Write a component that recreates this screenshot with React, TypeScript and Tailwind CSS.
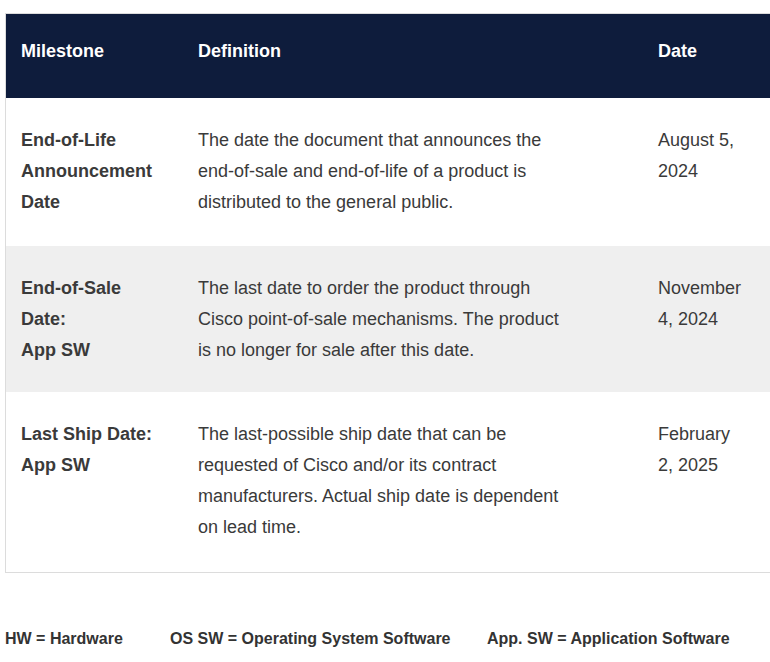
const rows = [
  {
    m: ['End-of-Life', 'Announcement', 'Date'],
    d: [
      'The date the document that announces the',
      'end-of-sale and end-of-life of a product is',
      'distributed to the general public.',
    ],
    t: ['August 5,', '2024'],
    bg: 'bg-white',
    h: 'h-[148px]',
  },
  {
    m: ['End-of-Sale', 'Date:', 'App SW'],
    d: [
      'The last date to order the product through',
      'Cisco point-of-sale mechanisms. The product',
      'is no longer for sale after this date.',
    ],
    t: ['November', '4, 2024'],
    bg: 'bg-[#efefef]',
    h: 'h-[146px]',
  },
  {
    m: ['Last Ship Date:', 'App SW'],
    d: [
      'The last-possible ship date that can be',
      'requested of Cisco and/or its contract',
      'manufacturers. Actual ship date is dependent',
      'on lead time.',
    ],
    t: ['February', '2, 2025'],
    bg: 'bg-white',
    h: 'h-[180px]',
  },
];

export default function App() {
  return (
    <div className="w-[770px] h-[662px] bg-white overflow-hidden text-[#3a3a3a] font-[Liberation_Sans,Arial,sans-serif]">
      <div className="pt-[13px] pl-[5px]">
        <div className="border border-r-0 border-[#dcdcdc]">
          <div className="flex h-[84px] bg-[#0e1c3c] text-white font-bold text-[18px] leading-[31px]">
            <div className="w-[177px] pl-[15px] pt-[22px]">Milestone</div>
            <div className="w-[460px] pl-[15px] pt-[22px]">Definition</div>
            <div className="flex-1 pl-[15px] pt-[22px]">Date</div>
          </div>
          {rows.map((r, i) => (
            <div key={i} className={`flex ${r.bg} ${r.h} text-[18px] leading-[31px] whitespace-nowrap`}>
              <div className="w-[177px] pl-[15px] pt-[27px] font-bold">
                {r.m.map((l) => (
                  <div key={l}>{l}</div>
                ))}
              </div>
              <div className="w-[460px] pl-[15px] pt-[27px]">
                {r.d.map((l) => (
                  <div key={l}>{l}</div>
                ))}
              </div>
              <div className="flex-1 pl-[15px] pt-[27px]">
                {r.t.map((l) => (
                  <div key={l}>{l}</div>
                ))}
              </div>
            </div>
          ))}
        </div>
      </div>
      <div className="flex mt-[54px] pl-[5px] text-[16px] font-bold text-[#333] whitespace-nowrap">
        <span className="w-[165px]">HW = Hardware</span>
        <span className="w-[317px]">OS SW = Operating System Software</span>
        <span>App. SW = Application Software</span>
      </div>
    </div>
  );
}
